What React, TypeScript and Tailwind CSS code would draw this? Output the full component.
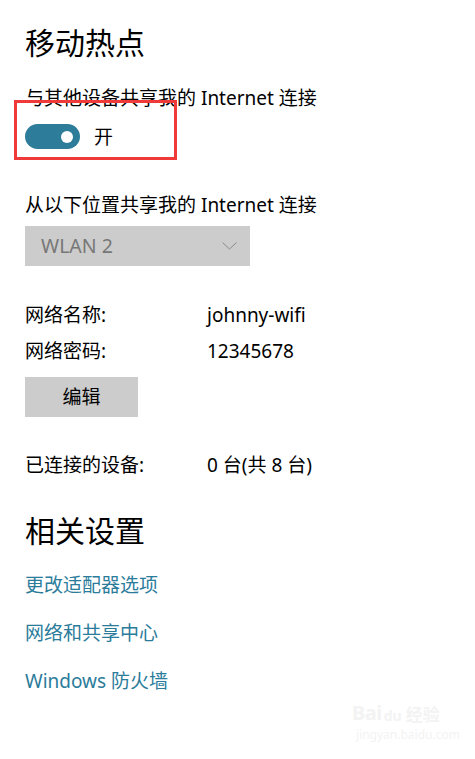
import React from "react";

const font = { fontFamily: '"Noto Sans", "Noto Sans CJK SC", sans-serif' };

export default function App() {
  return (
    <div
      className="relative w-[475px] h-[759px] bg-white overflow-hidden text-black"
      style={font}
    >
      <div className="flex flex-col pl-[25px] pt-[23px]">
        <div className="text-[30px] leading-[40px]">移动热点</div>
        <div className="mt-[23px] text-[19px] leading-[24px]">与其他设备共享我的 Internet 连接</div>
        <div className="mt-[14px] flex items-center h-[25px]">
          <div className="w-[55px] h-[25px] rounded-full bg-[#2d7d9a] flex items-center justify-end pr-[7px]">
            <div className="w-[12px] h-[12px] rounded-full bg-white" />
          </div>
          <span className="ml-[14px] text-[19px] leading-[24px]">开</span>
        </div>
        <div className="mt-[44px] text-[19px] leading-[24px]">从以下位置共享我的 Internet 连接</div>
        <div className="mt-[9px] w-[225px] h-[40px] bg-[#cccccc] flex items-center justify-between pl-[16px] pr-[13px]">
          <span className="text-[19.5px] leading-[24px] text-[#777777]">WLAN 2</span>
          <svg width="15" height="8" viewBox="0 0 15 8" fill="none">
            <path d="M0.5 0.5 L7.5 7 L14.5 0.5" stroke="#8a8a8a" strokeWidth="1" />
          </svg>
        </div>
        <div className="mt-[37px] flex text-[19px] leading-[24px]">
          <span className="w-[182px]">网络名称:</span>
          <span>johnny-wifi</span>
        </div>
        <div className="mt-[12px] flex text-[19px] leading-[24px]">
          <span className="w-[182px]">网络密码:</span>
          <span>12345678</span>
        </div>
        <div className="mt-[14px] w-[113px] h-[40px] bg-[#cccccc] flex items-center justify-center text-[19px] leading-[24px]">
          编辑
        </div>
        <div className="mt-[36px] flex text-[19px] leading-[24px]">
          <span className="w-[182px]">已连接的设备:</span>
          <span>0 台(共 8 台)</span>
        </div>
        <div className="mt-[34px] text-[30px] leading-[40px]">相关设置</div>
        <div className="mt-[22px] text-[19px] leading-[24px] text-[#2b7c9b]">更改适配器选项</div>
        <div className="mt-[24px] text-[19px] leading-[24px] text-[#2b7c9b]">网络和共享中心</div>
        <div className="mt-[24px] text-[19px] leading-[24px] text-[#2b7c9b]">Windows 防火墙</div>
      </div>

      <div className="absolute left-[14px] top-[100px] w-[163px] h-[60px] border-[3px] border-[#f03a3a]" />

      <div className="absolute left-[352px] top-[703px] flex flex-col items-start text-[#f3f3f3] select-none">
        <div className="flex items-end leading-none">
          <span className="text-[20px] font-bold tracking-tight">Bai</span>
          <span className="text-[14px] font-bold ml-[2px] mr-[4px]">du</span>
          <span className="text-[17px] font-bold">经验</span>
        </div>
        <div className="text-[12px] leading-[16px] mt-[4px] ml-[4px]">jingyan.baidu.com</div>
      </div>
    </div>
  );
}
